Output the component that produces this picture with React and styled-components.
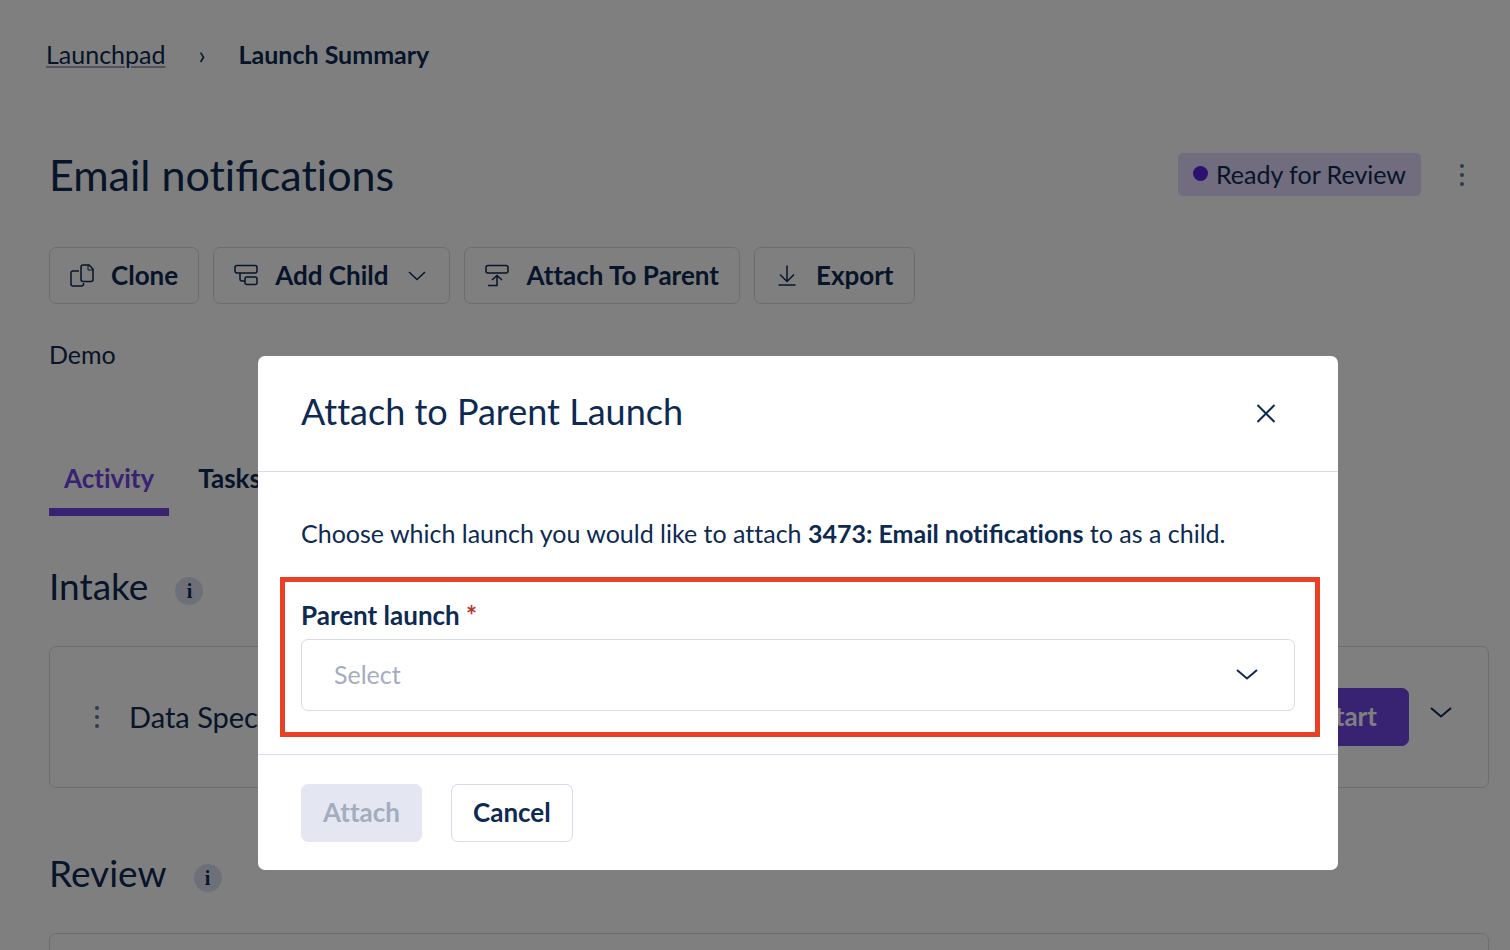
import React from "react";
import styled, { createGlobalStyle, ThemeProvider } from "styled-components";

const theme = {
  ink: "#0c2a52",
  muted: "#a3adbf",
  line: "#d7dbea",
  accent: "#7144e4",
  fill: "#e4e7f1",
};

const GlobalStyle = createGlobalStyle`
  *, *::before, *::after { box-sizing: border-box; }
  body {
    margin: 0;
    overflow: hidden;
    background: #fff;
    color: ${theme.ink};
    font-family: Lato, "Liberation Sans", sans-serif;
    font-size: 25px;
    line-height: 36px;
    font-variant-ligatures: none;
  }
  h1, h2, h3, p { margin: 0; font-weight: 400; }
  button, select { font: inherit; font-variant-ligatures: none; color: inherit; margin: 0; padding: 0; }
  button { background: none; border: 0; }
  svg { display: block; flex: none; fill: none; stroke: currentColor; }
`;

const Page = styled.div`
  height: 100vh;
  overflow: hidden;
`;

/* Only the "fi" pair is joined; "tt" and "ti" stay apart. */
const Ligature = styled.span`
  font-variant-ligatures: normal;
`;

const Breadcrumb = styled.nav`
  display: flex;
  align-items: center;
  gap: 33px;
  padding: 36px 46px 0;
`;

const CrumbLink = styled.a`
  color: inherit;
  text-decoration: underline;
  text-decoration-color: #a3a9bd;
  text-decoration-thickness: 2px;
  text-underline-offset: 2px;
`;

const Content = styled.main`
  display: flex;
  flex-direction: column;
  padding: 81px 21px 0 49px;
`;

const TitleRow = styled.header`
  display: flex;
  align-items: center;
  justify-content: space-between;
  height: 43px;
`;

const Title = styled.h1`
  font-size: 43px;
  line-height: 44px;
`;

const TitleSide = styled.div`
  display: flex;
  align-items: center;
  gap: 29px;
  padding-right: 15px;
`;

const Status = styled.span`
  display: flex;
  align-items: center;
  gap: 8px;
  height: 43px;
  padding: 0 15px 2px;
  border-radius: 5px;
  background: #e2d8fc;

  &::before {
    content: "";
    width: 15px;
    height: 15px;
    border-radius: 50%;
    background: #5824e0;
  }
`;

const IconButton = styled.button`
  display: grid;
  place-items: center;
  width: 24px;
  height: 36px;
  padding-bottom: ${(p) => (p.$raised ? "8px" : "0")};
  color: ${(p) => (p.$soft ? "#5876a8" : p.theme.ink)};
`;

const Toolbar = styled.div`
  display: flex;
  gap: 14px;
  margin-top: 51px;
`;

const Button = styled.button`
  display: flex;
  align-items: center;
  justify-content: center;
  gap: 17px;
  height: ${(p) => (p.$tall ? "58px" : "57px")};
  padding: 0 ${(p) => p.$pad || "20px"} 2px;
  border: 1px solid ${(p) => p.theme.line};
  border-radius: 7px;
  font-size: 26px;
  font-weight: 700;

  ${(p) => p.$primary && `background: ${p.theme.accent}; border-color: ${p.theme.accent}; color: #fff;`}

  &:disabled {
    background: ${(p) => p.theme.fill};
    border-color: ${(p) => p.theme.fill};
    color: ${(p) => p.theme.muted};
  }
`;

const Description = styled.p`
  margin-top: 32px;
`;

const Tabs = styled.div`
  display: flex;
  gap: 14px;
  margin-top: 88px;
`;

const Tab = styled.button`
  padding: 0 15px 12px;
  border-bottom: 8px solid ${(p) => (p.$active ? p.theme.accent : "transparent")};
  color: ${(p) => (p.$active ? p.theme.accent : p.theme.ink)};
  font-size: 26px;
  font-weight: 700;
`;

const Section = styled.section`
  margin-top: ${(p) => (p.$first ? "48px" : "63px")};
`;

const SectionHead = styled.div`
  display: flex;
  align-items: center;
  gap: 27px;
  margin-bottom: 38px;
`;

const SectionTitle = styled.h2`
  font-size: 37px;
  line-height: 44px;
`;

const Info = styled.button`
  width: 28px;
  height: 28px;
  margin-top: 10px;
  border-radius: 50%;
  background: #dbe1f1;
  font-family: "Liberation Serif", serif;
  font-size: 20px;
  font-weight: 700;
  line-height: 28px;
`;

const Card = styled.article`
  display: flex;
  align-items: center;
  gap: 20px;
  height: 142px;
  padding: 0 35px;
  border: 1px solid ${(p) => p.theme.line};
  border-radius: 7px;
`;

const CardTitle = styled.h3`
  flex: 1;
  font-size: 29px;
`;

const Backdrop = styled.div`
  position: fixed;
  inset: 0;
  padding: 356px 172px 0 258px;
  background: rgba(0, 0, 0, 0.5);
`;

const Dialog = styled.div`
  border-radius: 7px;
  background: #fff;
`;

const DialogHead = styled.header`
  display: flex;
  align-items: center;
  justify-content: space-between;
  height: 116px;
  padding: 0 60px 2px 43px;
  border-bottom: 1px solid ${(p) => p.theme.line};
`;

const DialogTitle = styled.h2`
  padding-bottom: 4px;
  font-size: 36px;
  line-height: 44px;
`;

const Prompt = styled.p`
  padding: 43px 43px 0;
`;

const Field = styled.div`
  display: flex;
  flex-direction: column;
  gap: 6px;
  margin: 26px 18px 17px 22px;
  padding: 15px 20px 21px 16px;
  border: 5px solid #ea4026;
`;

const Label = styled.label`
  font-size: 26px;
  font-weight: 700;
`;

const Required = styled.span`
  color: #b8342c;
`;

const SelectBox = styled.div`
  display: grid;
  align-items: center;

  > * { grid-area: 1 / 1; }
  > svg { justify-self: end; margin-right: 36px; pointer-events: none; }
`;

const Select = styled.select`
  appearance: none;
  width: 100%;
  height: 72px;
  padding: 0 72px 2px 32px;
  border: 1px solid ${(p) => p.theme.line};
  border-radius: 7px;
  background: #fff;
  color: ${(p) => p.theme.muted};
`;

const DialogFoot = styled.footer`
  display: flex;
  gap: 29px;
  padding: 29px 43px 28px;
  border-top: 1px solid ${(p) => p.theme.line};
`;

const Icon = ({ children, width = 1.5 }) => (
  <svg width="24" height="24" viewBox="0 0 24 24" strokeWidth={width} aria-hidden="true">
    {children}
  </svg>
);

const CloneIcon = () => (
  <Icon>
    <path d="M13 2h6l4 4v10.500a2 2 0 0 1-2 2h-8a2 2 0 0 1-2-2V4a2 2 0 0 1 2-2z" />
    <path d="M18 2v5h5" strokeWidth="1" />
    <path d="M9 8H3a2 2 0 0 0-2 2v11a2 2 0 0 0 2 2h8.500a2 2 0 0 0 2-2v-1" />
  </Icon>
);

const ChildIcon = () => (
  <Icon>
    <rect x="1" y="2.500" width="22" height="7.500" rx="2" />
    <rect x="11" y="14" width="12" height="7.500" rx="2" />
    <path d="M6 10v6a2 2 0 0 0 2 2h3" />
  </Icon>
);

const ParentIcon = () => (
  <Icon>
    <rect x="1" y="2.500" width="22" height="7.500" rx="2" />
    <path d="M7 17l5-4.500 5 4.500M12 13v9.500H3" />
  </Icon>
);

const ExportIcon = () => (
  <Icon>
    <path d="M12 2.500v16M5 11.500l7 7 7-7M3.500 22h17" />
  </Icon>
);

const ChevronIcon = ({ thin }) => (
  <Icon width={thin ? 1.5 : 2}>
    <path d={thin ? "M4 9l8 7.500 8-7.500" : "M2 7l10 8.500 10-8.500"} />
  </Icon>
);

const CloseIcon = () => (
  <Icon width={2}>
    <path d="M3.500 4l17 17M20.500 4l-17 17" />
  </Icon>
);

const KebabIcon = () => (
  <Icon width={0}>
    <g fill="currentColor">
      <circle cx="12" cy="3" r="2" />
      <circle cx="12" cy="12" r="2" />
      <circle cx="12" cy="21" r="2" />
    </g>
  </Icon>
);

const Group = ({ title, first, children }) => (
  <Section $first={first}>
    <SectionHead>
      <SectionTitle>{title}</SectionTitle>
      <Info type="button" aria-label={`About ${title}`}>i</Info>
    </SectionHead>
    {children}
  </Section>
);

const LaunchName = () => (
  <>Email noti<Ligature>fi</Ligature>cations</>
);

export default function App() {
  return (
    <ThemeProvider theme={theme}>
      <GlobalStyle />
      <Page>
        <Breadcrumb aria-label="Breadcrumb">
          <CrumbLink href="#launchpad">Launchpad</CrumbLink>
          <span>›</span>
          <strong>Launch Summary</strong>
        </Breadcrumb>
        <Content>
          <TitleRow>
            <Title><LaunchName /></Title>
            <TitleSide>
              <Status>Ready for Review</Status>
              <IconButton type="button" $soft aria-label="More options"><KebabIcon /></IconButton>
            </TitleSide>
          </TitleRow>
          <Toolbar>
            <Button type="button"><CloneIcon />Clone</Button>
            <Button type="button"><ChildIcon />Add Child<ChevronIcon thin /></Button>
            <Button type="button"><ParentIcon />Attach To Parent</Button>
            <Button type="button"><ExportIcon />Export</Button>
          </Toolbar>
          <Description>Demo</Description>
          <Tabs role="tablist">
            <Tab type="button" role="tab" aria-selected="true" $active>Activity</Tab>
            <Tab type="button" role="tab" aria-selected="false">Tasks</Tab>
          </Tabs>
          <Group title="Intake" first>
            <Card>
              <IconButton type="button" $soft aria-label="Reorder"><KebabIcon /></IconButton>
              <CardTitle>Data Spec</CardTitle>
              <Button type="button" $primary $tall $pad="31px">Start</Button>
              <IconButton type="button" $raised aria-label="Expand"><ChevronIcon /></IconButton>
            </Card>
          </Group>
          <Group title="Review">
            <Card />
          </Group>
        </Content>
      </Page>
      <Backdrop>
        <Dialog role="dialog" aria-modal="true" aria-labelledby="dialog-title">
          <DialogHead>
            <DialogTitle id="dialog-title">Attach to Parent Launch</DialogTitle>
            <IconButton type="button" aria-label="Close"><CloseIcon /></IconButton>
          </DialogHead>
          <Prompt>
            Choose which launch you would like to attach <strong>3473: <LaunchName /></strong> to as a child.
          </Prompt>
          <Field>
            <Label htmlFor="parent-launch">Parent launch <Required>*</Required></Label>
            <SelectBox>
              <Select id="parent-launch" defaultValue="" required>
                <option value="">Select</option>
              </Select>
              <ChevronIcon />
            </SelectBox>
          </Field>
          <DialogFoot>
            <Button type="button" $tall $pad="21px" disabled>Attach</Button>
            <Button type="button" $tall $pad="21px">Cancel</Button>
          </DialogFoot>
        </Dialog>
      </Backdrop>
    </ThemeProvider>
  );
}
